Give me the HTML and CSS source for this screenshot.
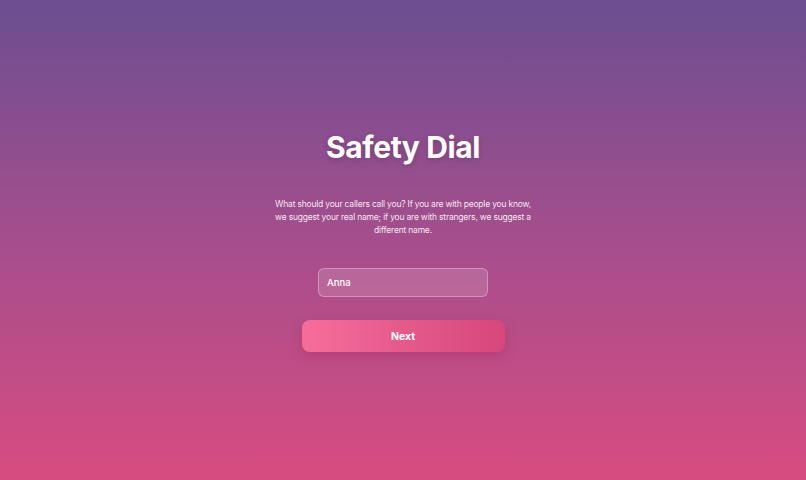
FILE: index.html
```html
<!DOCTYPE html>
<html lang="en">
<head>
<meta charset="utf-8">
<title>Safety Dial</title>
<link rel="stylesheet" href="styles.css">
</head>
<body>
<main class="screen">
  <h1 class="title">Safety Dial</h1>
  <p class="intro">What should your callers call you? If you are with people you know, we suggest your real name; if you are with strangers, we suggest a different name.</p>
  <input class="name-input" type="text" value="Anna">
  <button class="next-btn" type="button">Next</button>
</main>
</body>
</html>
```

FILE: styles.css
```css
html, body {
  margin: 0;
  padding: 0;
  height: 100%;
}
body {
  font-family: "Inter", "Noto Sans", sans-serif;
  background: linear-gradient(180deg, #6b4e91 0%, #a54e8d 50%, #d84c80 100%);
  color: #fff;
}
.screen {
  height: 480px;
  display: flex;
  flex-direction: column;
  align-items: center;
  box-sizing: border-box;
  padding-top: 127px;
}
.title {
  margin: 0;
  font-size: 30px;
  font-weight: 700;
  letter-spacing: -0.4px;
  line-height: 40px;
  text-shadow: 0 2px 6px rgba(0, 0, 0, 0.18);
}
.intro {
  margin: 31px 0 0;
  width: 256px;
  font-size: 8.5px;
  letter-spacing: -0.2px;
  line-height: 13px;
  text-align: center;
  color: rgba(255, 255, 255, 0.9);
}
.name-input {
  margin-top: 31px;
  width: 170px;
  height: 29px;
  box-sizing: border-box;
  border: 1px solid rgba(255, 255, 255, 0.3);
  border-radius: 6px;
  background: rgba(255, 255, 255, 0.14);
  color: #fff;
  font-family: inherit;
  font-size: 9.5px;
  font-weight: 500;
  padding: 0 8px;
  outline: none;
}
.next-btn {
  margin-top: 23px;
  width: 203px;
  height: 32px;
  border: none;
  border-radius: 8px;
  background: linear-gradient(90deg, #f66d9b 0%, #d6477b 100%);
  box-shadow: 0 4px 12px rgba(150, 40, 90, 0.35);
  color: #fff;
  font-family: inherit;
  font-size: 10.5px;
  font-weight: 700;
}
```
